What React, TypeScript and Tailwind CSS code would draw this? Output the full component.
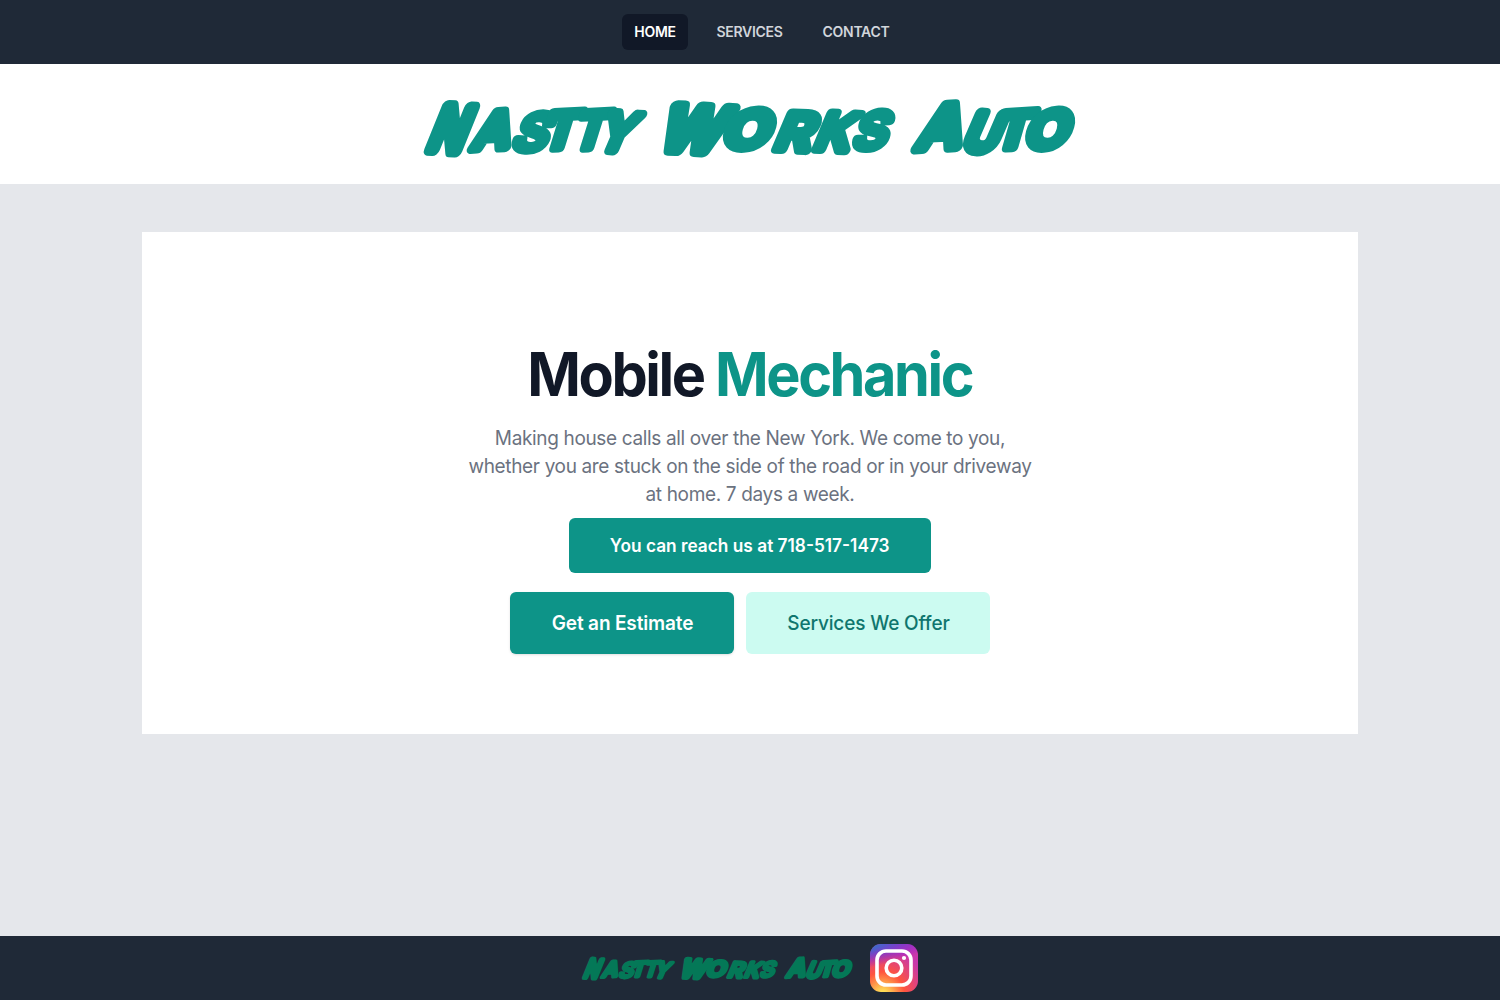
type Glyph = [letter: string, x: number, width: number, rotate: number, stroke: number];

const GLYPHS: Glyph[] = [
  ["N", 427, 36, 3, 13],
  ["a", 472, 36, -3, 10],
  ["s", 511, 35, 4, 8],
  ["t", 541, 34, -3, 9],
  ["t", 572, 32, -3, 9],
  ["y", 597, 33, 4, 10],
  [" ", 636, 10, 0, 0],
  ["W", 658, 62, 3, 12],
  ["o", 723, 46, -5, 10],
  ["r", 773, 37, 3, 9],
  ["k", 813, 36, 3, 9],
  ["s", 852, 34, -2, 8],
  [" ", 892, 10, 0, 0],
  ["A", 916, 43, -3, 11],
  ["u", 962, 35, 4, 11],
  ["t", 993, 36, -4, 9],
  ["o", 1025, 42, -5, 10],
];

function Wordmark({ className }: { className: string }) {
  return (
    <svg viewBox="424 96 652 61" className={className} role="img" aria-label="Nastty Works Auto">
      <text
        y="149"
        transform="translate(53 0) skewX(-20)"
        fill="currentColor"
        stroke="currentColor"
        strokeLinejoin="round"
        fontFamily="Inter, sans-serif"
        fontWeight="500"
      >
        {GLYPHS.map(([letter, x, width, rotate, stroke], i) => (
          <tspan
            key={i}
            x={x}
            textLength={width}
            lengthAdjust="spacingAndGlyphs"
            rotate={rotate}
            strokeWidth={stroke}
            fontSize={letter === letter.toUpperCase() ? 59 : 50}
          >
            {letter.toUpperCase()}
          </tspan>
        ))}
      </text>
    </svg>
  );
}

function InstagramLogo() {
  return (
    <svg viewBox="0 0 48 48" className="size-12">
      <defs>
        <radialGradient id="warm" cx="0" cy="0" r="1" gradientUnits="userSpaceOnUse" gradientTransform="matrix(0 -47.6 44.2 0 12.75 51.7)">
          <stop offset="0" stopColor="#fd5" />
          <stop offset=".1" stopColor="#fd5" />
          <stop offset=".5" stopColor="#ff543e" />
          <stop offset="1" stopColor="#c837ab" />
        </radialGradient>
        <radialGradient id="cool" cx="0" cy="0" r="1" gradientUnits="userSpaceOnUse" gradientTransform="matrix(4.17 20.83 -85.87 17.18 -8.04 3.46)">
          <stop offset="0" stopColor="#3771c8" />
          <stop offset=".128" stopColor="#3771c8" />
          <stop offset="1" stopColor="#60f" stopOpacity="0" />
        </radialGradient>
      </defs>
      <rect width="48" height="48" rx="11" fill="url(#warm)" />
      <rect width="48" height="48" rx="11" fill="url(#cool)" />
      <rect x="7" y="7" width="34" height="34" rx="9" fill="none" stroke="#fff" strokeWidth="3.6" />
      <circle cx="24" cy="24" r="7.8" fill="none" stroke="#fff" strokeWidth="3.6" />
      <circle cx="34" cy="14" r="2.1" fill="#fff" />
    </svg>
  );
}

export default function App() {
  return (
    <div className="flex h-screen flex-col bg-[#e5e7eb] font-['Inter',sans-serif] antialiased">
      <nav className="flex h-16 shrink-0 items-center justify-center gap-4 bg-[#1f2937] pl-[23px] text-sm font-semibold tracking-[-0.3px] text-[#d1d5db]">
        <a className="w-[66px] rounded-md bg-[#111827] py-2 text-center text-white">HOME</a>
        <a className="w-[91px] rounded-md py-2 text-center">SERVICES</a>
        <a className="w-[90px] rounded-md py-2 text-center">CONTACT</a>
      </nav>
      <header className="flex h-30 shrink-0 justify-center bg-white pt-8 text-[#0d9488]">
        <Wordmark className="h-[61px] w-[652px] overflow-visible" />
      </header>
      <main className="flex-1 pt-12">
        <section className="mx-auto flex h-[502px] w-[1216px] flex-col items-center bg-white pt-28 text-center">
          <h1 className="scale-x-[0.96] text-6xl leading-[60px] font-bold tracking-[-2.5px] whitespace-nowrap text-[#111827]">
            Mobile <span className="text-[#0d9488]">Mechanic</span>
          </h1>
          <p className="mt-5 w-[606px] scale-x-[0.95] text-xl leading-7 tracking-[-0.36px] text-[#6b7280]">
            Making house calls all over the New York. We come to you, whether you are stuck on the side of the road or in your driveway at home. 7 days a week.
          </p>
          <a className="mt-[10px] flex h-[55px] w-[362px] items-center justify-center rounded-md bg-[#0d9488] text-lg font-semibold text-white">
            <span className="scale-x-[0.96] whitespace-nowrap">You can reach us at 718-517-1473</span>
          </a>
          <div className="mt-[19px] flex gap-3 text-xl tracking-[-0.15px]">
            <a className="flex h-[62px] w-56 items-center justify-center rounded-md bg-[#0d9488] font-semibold text-white shadow">
              <span className="scale-x-[0.95]">Get an Estimate</span>
            </a>
            <a className="flex h-[62px] w-[244px] items-center justify-center rounded-md bg-[#ccfbf1] font-medium text-[#0f766e]">
              <span className="scale-x-[0.95]">Services We Offer</span>
            </a>
          </div>
        </section>
      </main>
      <footer className="flex h-16 shrink-0 items-center justify-center gap-[17px] bg-[#1f2937] pr-px text-[#047857]">
        <Wordmark className="h-[25.4px] w-[271px] overflow-visible" />
        <InstagramLogo />
      </footer>
    </div>
  );
}
